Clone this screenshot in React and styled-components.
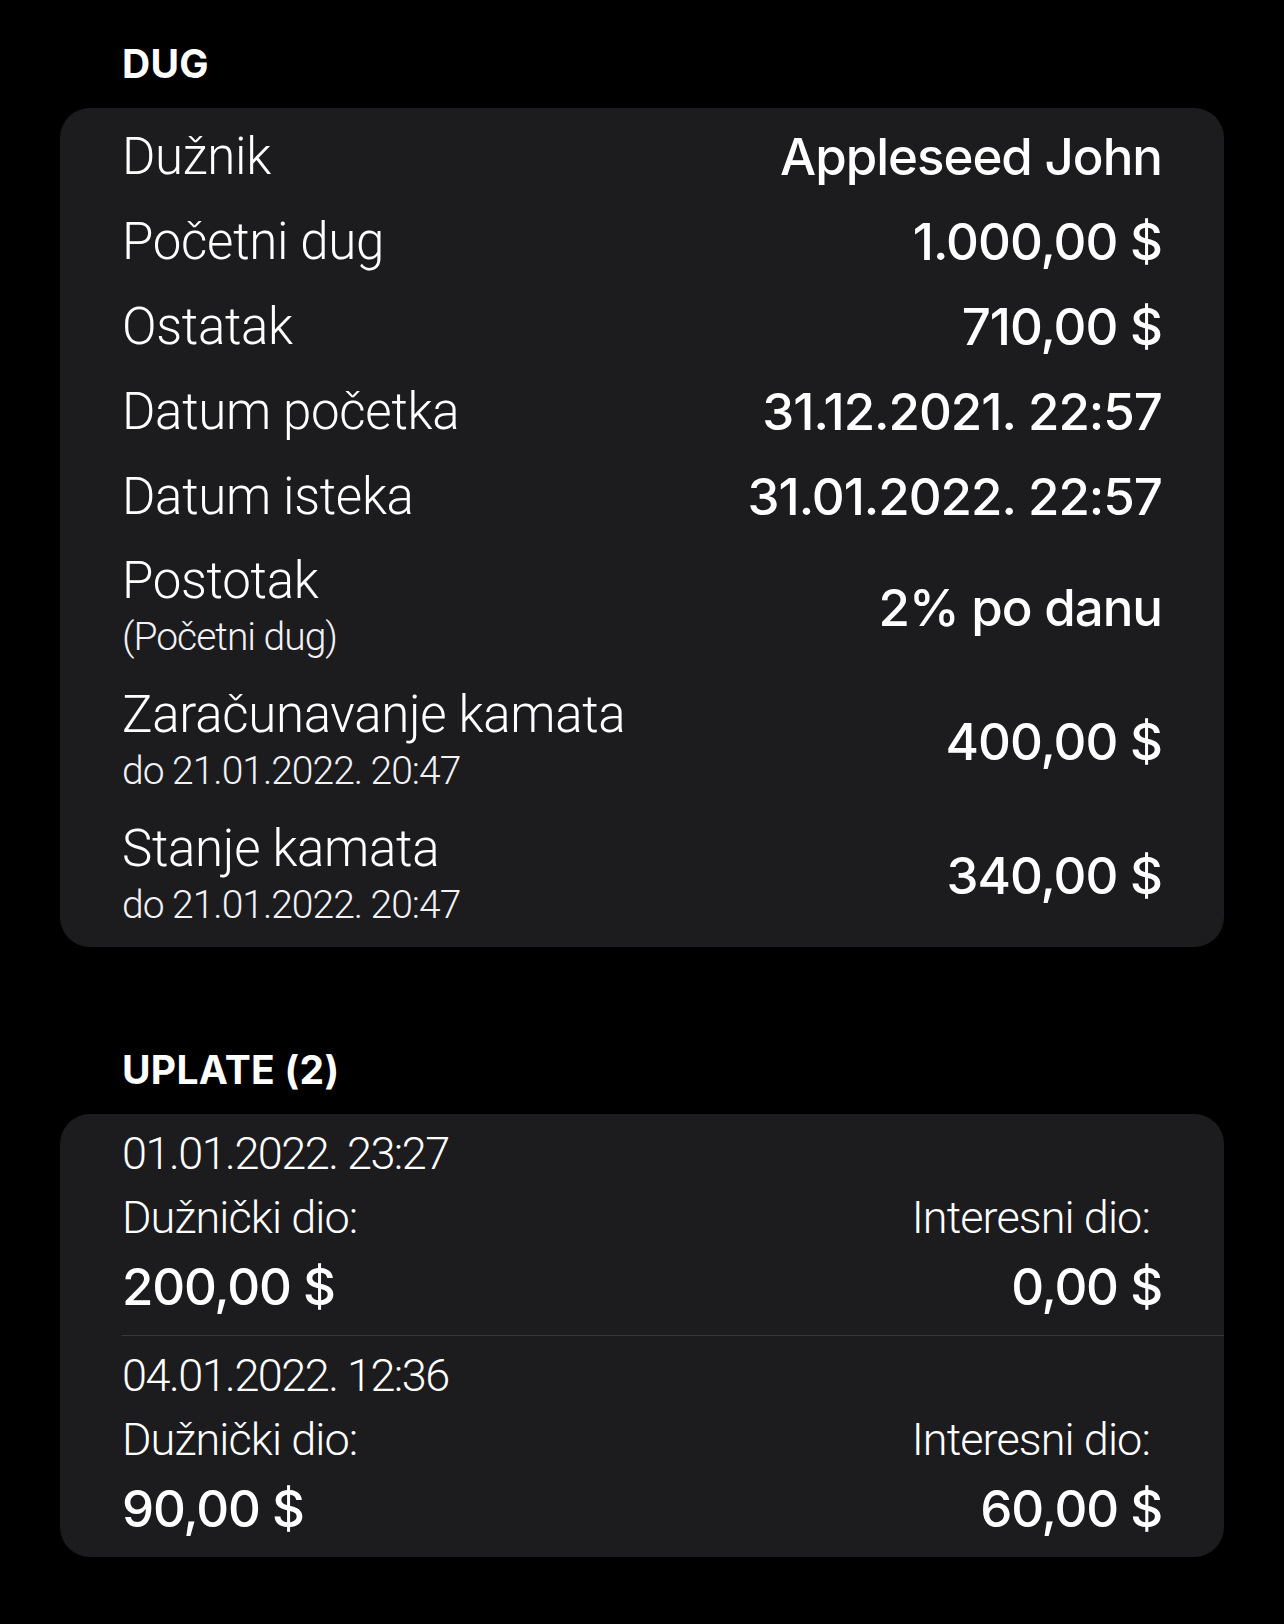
import React from "react";
import styled, { createGlobalStyle } from "styled-components";

const GlobalStyle = createGlobalStyle`
  html, body {
    margin: 0;
    padding: 0;
    background: #000;
  }
  body {
    font-family: Inter, "Noto Sans", "Liberation Sans", sans-serif;
    color: #fff;
    -webkit-font-smoothing: antialiased;
  }
`;

const thin = `Roboto, Inter, "Liberation Sans", sans-serif`;

const Page = styled.div`
  min-height: 1624px;
  box-sizing: border-box;
  padding: 40px 60px 0;
  background: #000;
`;

const Section = styled.section`
  margin-bottom: ${(props) => props.gap || 0}px;
`;

const Header = styled.h2`
  margin: 0 0 21px;
  padding-left: 62px;
  font-size: 39px;
  line-height: 47px;
  font-weight: 700;
  letter-spacing: 0.3px;
  text-transform: uppercase;
  color: #fff;
`;

const Card = styled.div`
  background: #1c1c1e;
  border-radius: 30px;
  padding: ${(props) => props.pad || "0"};
  overflow: hidden;
`;

const Row = styled.div`
  display: flex;
  align-items: center;
  justify-content: space-between;
  min-height: 85px;
  padding: 0 62px;
  box-sizing: border-box;
  ${(props) => props.tall && `padding-top: 12px; padding-bottom: 9px; min-height: 134px;`}
`;

const LabelBlock = styled.div`
  display: flex;
  flex-direction: column;
`;

const Label = styled.span`
  font-family: ${thin};
  font-size: 51px;
  line-height: 60px;
  font-weight: 300;
  letter-spacing: -0.3px;
  color: #fff;
`;

const SubLabel = styled.span`
  font-family: ${thin};
  font-size: 39px;
  line-height: 53px;
  font-weight: 300;
  letter-spacing: -1px;
  color: #f2f2f7;
`;

const Value = styled.span`
  font-size: 51px;
  line-height: 60px;
  font-weight: 500;
  letter-spacing: -1px;
  color: #fff;
  text-align: right;
  white-space: nowrap;
`;

const Payment = styled.div`
  margin-left: 62px;
  padding: 13px 62px 18px 0;
  border-bottom: ${(props) => (props.last ? "none" : "1px solid #38383a")};
`;

const PayDate = styled.div`
  font-family: ${thin};
  font-size: 45px;
  line-height: 54px;
  font-weight: 300;
  letter-spacing: -1.5px;
  color: #fff;
`;

const PayParts = styled.div`
  display: flex;
  justify-content: space-between;
  margin-top: 10px;
`;

const PayCol = styled.div`
  display: flex;
  flex-direction: column;
  align-items: ${(props) => (props.right ? "flex-end" : "flex-start")};
`;

const PartLabel = styled.span`
  font-family: ${thin};
  font-size: 45px;
  line-height: 54px;
  font-weight: 300;
  letter-spacing: -0.9px;
  color: #fff;
  padding-right: ${(props) => (props.right ? "12px" : "0")};
`;

const PartAmount = styled.span`
  margin-top: 12px;
  font-size: 51px;
  line-height: 60px;
  font-weight: 500;
  letter-spacing: -1.2px;
  color: #fff;
`;

const debtRows = [
  { label: "Dužnik", value: "Appleseed John" },
  { label: "Početni dug", value: "1.000,00 $" },
  { label: "Ostatak", value: "710,00 $" },
  { label: "Datum početka", value: "31.12.2021. 22:57" },
  { label: "Datum isteka", value: "31.01.2022. 22:57" },
  { label: "Postotak", sub: "(Početni dug)", value: "2% po danu" },
  { label: "Zaračunavanje kamata", sub: "do 21.01.2022. 20:47", value: "400,00 $" },
  { label: "Stanje kamata", sub: "do 21.01.2022. 20:47", value: "340,00 $" },
];

const payments = [
  { date: "01.01.2022. 23:27", debt: "200,00 $", interest: "0,00 $" },
  { date: "04.01.2022. 12:36", debt: "90,00 $", interest: "60,00 $" },
];

export default function App() {
  return (
    <>
      <GlobalStyle />
      <Page>
        <Section gap={99}>
          <Header>Dug</Header>
          <Card pad="6px 0">
            {debtRows.map((row) => (
              <Row key={row.label} tall={!!row.sub}>
                <LabelBlock>
                  <Label>{row.label}</Label>
                  {row.sub && <SubLabel>{row.sub}</SubLabel>}
                </LabelBlock>
                <Value>{row.value}</Value>
              </Row>
            ))}
          </Card>
        </Section>

        <Section>
          <Header>Uplate ({payments.length})</Header>
          <Card>
            {payments.map((p, i) => (
              <Payment key={p.date} last={i === payments.length - 1}>
                <PayDate>{p.date}</PayDate>
                <PayParts>
                  <PayCol>
                    <PartLabel>Dužnički dio:</PartLabel>
                    <PartAmount>{p.debt}</PartAmount>
                  </PayCol>
                  <PayCol right>
                    <PartLabel right>Interesni dio:</PartLabel>
                    <PartAmount>{p.interest}</PartAmount>
                  </PayCol>
                </PayParts>
              </Payment>
            ))}
          </Card>
        </Section>
      </Page>
    </>
  );
}
